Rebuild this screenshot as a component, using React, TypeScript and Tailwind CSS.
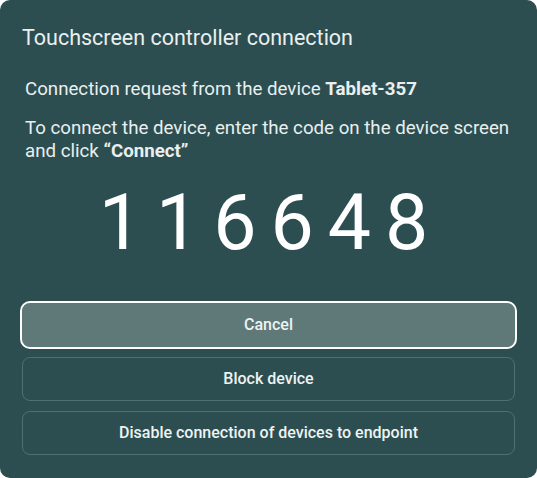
export default function App() {
  return (
    <div className="w-[537px] h-[478px] bg-white" style={{ fontFamily: 'Roboto, "Noto Sans", sans-serif' }}>
      <div className="w-full h-full rounded-[10px] bg-[#2c4e51] text-[#e9efef] flex flex-col px-[22px]">
        <h1 className="mt-[25px] text-[21.5px] leading-[26px] font-normal">Touchscreen controller connection</h1>
        <p className="mt-[27px] ml-[3px] text-[18.7px] leading-[23px]">
          Connection request from the device <span className="font-bold">Tablet-357</span>
        </p>
        <p className="mt-[16px] ml-[3px] text-[18.7px] leading-[23px]">
          To connect the device, enter the code on the device screen and click <span className="font-bold">“Connect”</span>
        </p>
        <div className="mt-[10px] h-[100px] flex items-center justify-center text-white text-[77px] leading-none tracking-[14px] pl-[4px]">
          116648
        </div>
        <div className="mt-[30px] flex flex-col gap-[10px]">
          <button className="h-[44px] rounded-[8px] bg-[#5f7979] outline-2 outline-white text-[16px] font-medium text-[#eef3f3]">
            Cancel
          </button>
          <button className="h-[44px] rounded-[8px] border border-[#50706f] text-[16px] font-medium text-[#eef3f3]">
            Block device
          </button>
          <button className="h-[44px] rounded-[8px] border border-[#50706f] text-[16px] font-medium text-[#eef3f3]">
            Disable connection of devices to endpoint
          </button>
        </div>
      </div>
    </div>
  );
}
